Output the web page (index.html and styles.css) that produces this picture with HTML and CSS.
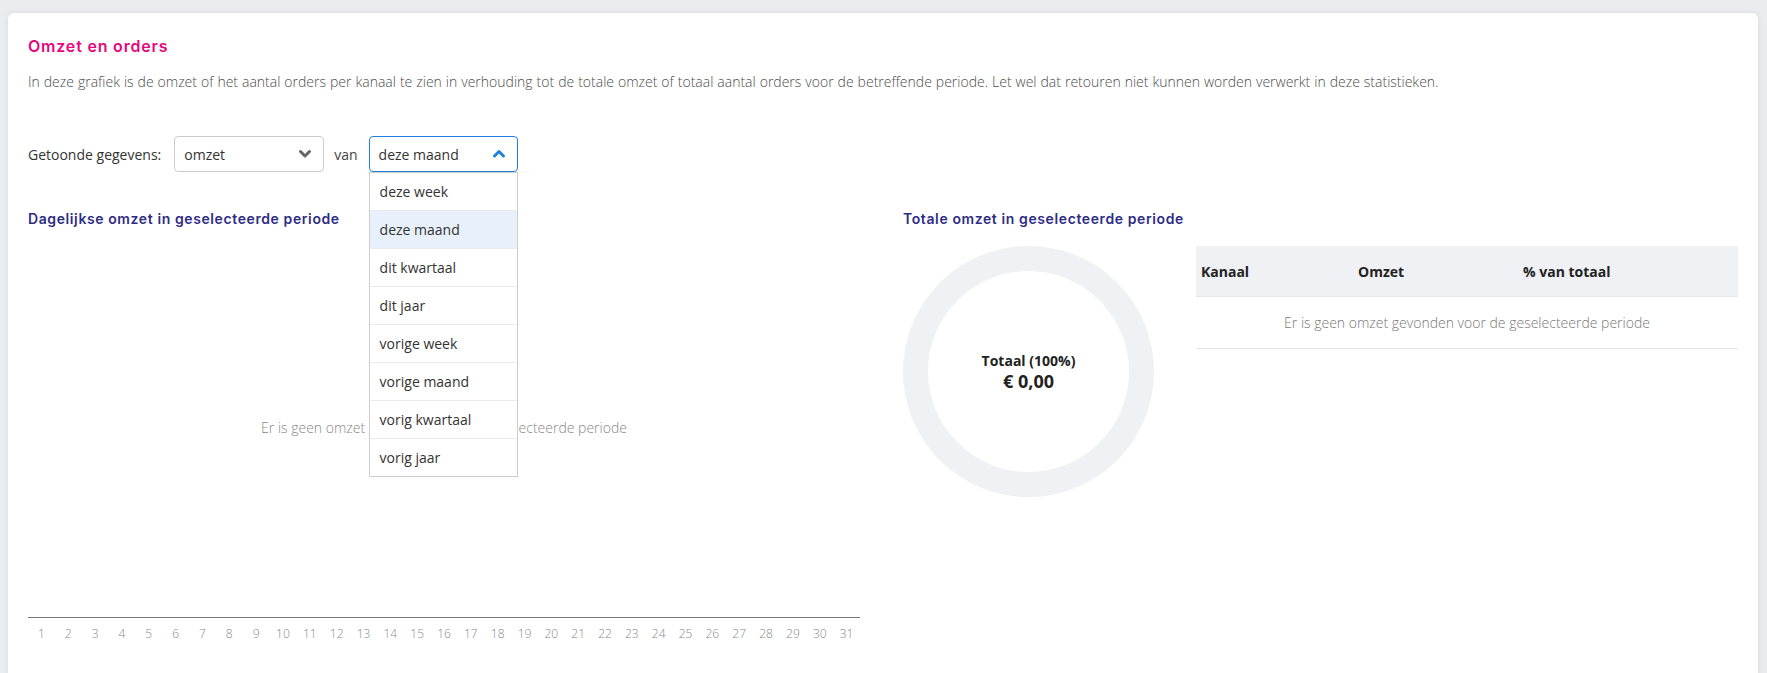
FILE: index.html
```html
<!DOCTYPE html>
<html lang="nl">
<head>
<meta charset="UTF-8">
<title>Omzet en orders</title>
<link rel="stylesheet" href="styles.css">
</head>
<body>
<div class="card">
    <h1 class="card-title">Omzet en orders</h1>
    <p class="intro">In deze grafiek is de omzet of het aantal orders per kanaal te zien in verhouding tot de totale omzet of totaal aantal orders voor de betreffende periode. Let wel dat retouren niet kunnen worden verwerkt in deze statistieken.</p>

    <div class="filters">
        <span class="filter-label">Getoonde gegevens:</span>
        <div class="select">
            <span>omzet</span>
            <svg class="chevron" width="14" height="10" viewBox="0 0 14 10"><polyline points="2.5,2.5 7,7 11.5,2.5" fill="none" stroke="#666" stroke-width="3" stroke-linecap="round" stroke-linejoin="round"/></svg>
        </div>
        <span class="filter-sep">van</span>
        <div class="select select-open">
            <span>deze maand</span>
            <svg class="chevron" width="14" height="10" viewBox="0 0 14 10"><polyline points="2.5,7 7,2.5 11.5,7" fill="none" stroke="#1f80e0" stroke-width="3" stroke-linecap="round" stroke-linejoin="round"/></svg>
            <ul class="dropdown">
                <li>deze week</li>
                <li class="active">deze maand</li>
                <li>dit kwartaal</li>
                <li>dit jaar</li>
                <li>vorige week</li>
                <li>vorige maand</li>
                <li>vorig kwartaal</li>
                <li>vorig jaar</li>
            </ul>
        </div>
    </div>

    <div class="columns">
        <div class="column">
            <h2 class="section-title">Dagelijkse omzet in geselecteerde periode</h2>
            <div class="chart">
                <div class="chart-empty">Er is geen omzet gevonden voor de geselecteerde periode</div>
            </div>
            <div class="axis">
                <span>1</span><span>2</span><span>3</span><span>4</span><span>5</span><span>6</span><span>7</span><span>8</span><span>9</span><span>10</span>
                <span>11</span><span>12</span><span>13</span><span>14</span><span>15</span><span>16</span><span>17</span><span>18</span><span>19</span><span>20</span>
                <span>21</span><span>22</span><span>23</span><span>24</span><span>25</span><span>26</span><span>27</span><span>28</span><span>29</span><span>30</span>
                <span>31</span>
            </div>
        </div>

        <div class="column">
            <h2 class="section-title">Totale omzet in geselecteerde periode</h2>
            <div class="totals">
                <div class="donut">
                    <div class="donut-label">Totaal (100%)</div>
                    <div class="donut-value">€ 0,00</div>
                </div>
                <table class="channel-table">
                    <tr>
                        <th class="col-channel">Kanaal</th>
                        <th class="col-revenue">Omzet</th>
                        <th>% van totaal</th>
                    </tr>
                    <tr>
                        <td colspan="3" class="empty">Er is geen omzet gevonden voor de geselecteerde periode</td>
                    </tr>
                </table>
            </div>
        </div>
    </div>
</div>
</body>
</html>
```

FILE: styles.css
```css
html, body {
    height: 100%;
    overflow: hidden;
}

body {
    margin: 0;
    background-color: #ebecf0;
    font-family: "Open Sans", Arial, sans-serif;
    font-size: 14px;
    color: #333;
}

.card {
    margin: 13px 9px 0 8px;
    padding: 23px 20px 0 20px;
    min-height: 720px;
    background-color: #fff;
    border-radius: 6px;
    box-shadow: 0 0 6px rgba(0, 0, 0, 0.08);
}

.card-title {
    margin: 0;
    font-family: Inter, "Open Sans", sans-serif;
    font-size: 16px;
    font-weight: 600;
    line-height: 20px;
    letter-spacing: 0.8px;
    color: #e5077e;
}

.intro {
    margin: 16px 0 0 0;
    line-height: 20px;
    font-weight: 300;
    word-spacing: 0.35px;
    color: #4d4d4d;
}

.filters {
    display: flex;
    align-items: center;
    margin-top: 44px;
}

.filter-label {
    margin-right: 13px;
}

.filter-sep {
    margin: 0 11px 0 10px;
    color: #444;
}

.select {
    position: relative;
    display: flex;
    align-items: center;
    justify-content: space-between;
    box-sizing: border-box;
    width: 150px;
    height: 36px;
    padding: 0 11px 0 9px;
    border: 1px solid #ccc;
    border-radius: 4px;
}

.select-open {
    width: 149px;
    border-color: #1f80e0;
}

.dropdown {
    position: absolute;
    top: 35px;
    left: -1px;
    right: -1px;
    margin: 0;
    padding: 0;
    list-style: none;
    background-color: #fff;
    border: 1px solid #ccc;
    z-index: 2;
}

.dropdown li {
    height: 37px;
    line-height: 37px;
    padding: 0 10px;
    border-bottom: 1px solid #ebebeb;
    color: #333;
}

.dropdown li:last-child {
    border-bottom: none;
}

.dropdown li.active {
    background-color: #e8f1fb;
}

.columns {
    display: grid;
    grid-template-columns: 832px 1fr;
    column-gap: 43px;
    margin-top: 38px;
}

.section-title {
    margin: 0;
    font-family: Inter, "Open Sans", sans-serif;
    font-size: 14px;
    font-weight: 600;
    line-height: 18px;
    letter-spacing: 0.6px;
    color: #2f2d84;
}

.chart {
    height: 371px;
    margin-top: 18px;
    border-bottom: 1px solid #777;
}

.chart-empty {
    padding-top: 172px;
    line-height: 20px;
    text-align: center;
    font-weight: 300;
    color: #888;
}

.axis {
    display: grid;
    grid-template-columns: repeat(31, 1fr);
    margin-top: 8px;
    font-size: 12px;
    font-weight: 300;
    line-height: 16px;
    color: #888;
    text-align: center;
}

.totals {
    display: flex;
    gap: 42px;
    margin-top: 18px;
}

.donut {
    flex: none;
    display: flex;
    flex-direction: column;
    align-items: center;
    justify-content: center;
    box-sizing: border-box;
    width: 251px;
    height: 251px;
    border: 25px solid #f0f1f5;
    border-radius: 50%;
    color: #222;
    font-weight: 700;
}

.donut-label {
    font-size: 14px;
    line-height: 18px;
}

.donut-value {
    font-size: 18px;
    line-height: 22px;
}

.channel-table {
    flex: 1;
    align-self: flex-start;
    border-collapse: collapse;
}

.channel-table th {
    height: 50px;
    padding: 0 0 0 5px;
    background-color: #f0f1f5;
    border-bottom: 1px solid #e6e6e6;
    text-align: left;
    font-weight: 700;
    color: #222;
}

.col-channel {
    width: 152px;
}

.col-revenue {
    width: 160px;
}

.channel-table td.empty {
    height: 51px;
    padding: 0;
    text-align: center;
    font-weight: 300;
    color: #777;
    border-bottom: 1px solid #e6e6e6;
}
```
